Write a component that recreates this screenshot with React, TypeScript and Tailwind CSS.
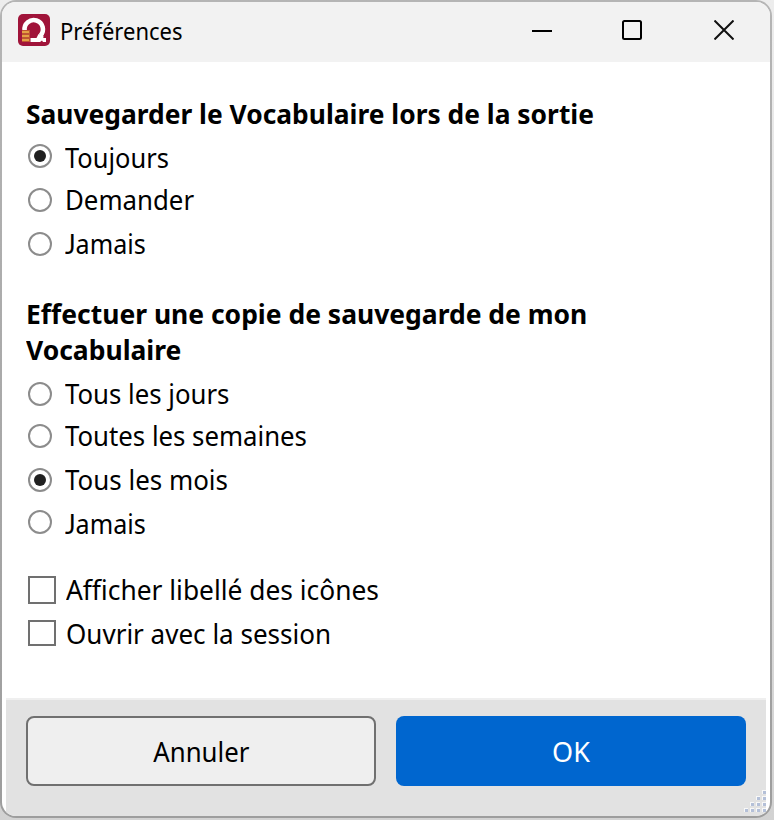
import type { ReactNode } from "react";

function Radio({
  label,
  checked = false,
  dot = "mt-[6px]",
  height = "h-11",
  stretch,
}: {
  label: ReactNode;
  checked?: boolean;
  dot?: string;
  height?: string;
  stretch: string;
}) {
  return (
    <div role="radio" aria-checked={checked} className={`flex items-start pl-[2px] ${height}`}>
      <span
        className={`flex size-6 shrink-0 items-center justify-center rounded-full border-2 border-[#8c8c8c] bg-white ${dot}`}
      >
        {checked && <span className="size-3 rounded-full bg-[#202020]" />}
      </span>
      <span className={`ml-[12.5px] origin-left whitespace-nowrap ${stretch}`}>{label}</span>
    </div>
  );
}

function Checkbox({ label, box, height, stretch }: { label: string; box: string; height: string; stretch: string }) {
  return (
    <div role="checkbox" aria-checked={false} className={`flex items-start pl-[2px] ${height}`}>
      <span className={`mt-1 w-7 shrink-0 border-2 border-[#707070] bg-white ${box}`} />
      <span className={`ml-[10px] origin-left whitespace-nowrap ${stretch}`}>{label}</span>
    </div>
  );
}

function Never() {
  return (
    <>
      <span className="font-['Lato']">J</span>amais
    </>
  );
}

function AppIcon() {
  return (
    <svg width="32" height="32" viewBox="0 0 32 32" className="shrink-0">
      <rect width="32" height="32" rx="5" fill="#a0143a" />
      <path d="M6.6 16.5A9.2 9.2 0 1 1 22.5 21.5" fill="none" stroke="#fff" strokeWidth="4.6" />
      <path d="M12.5 24H18.5L20.5 20L25.5 22L25.3 24H28V28H25L24 26.6L22 28H12.5Z" fill="#fff" />
      <path d="M4 16h8v12H4z" fill="#bf5532" />
      <path d="M4 17h7v2H4zM4 21h7v2H4zM4 25h7v2H4z" fill="#e5a044" />
    </svg>
  );
}

const gripDots = [
  [18, 0],
  [12, 6], [18, 6],
  [6, 12], [12, 12], [18, 12],
  [0, 18], [6, 18], [12, 18], [18, 18],
];

function SizeGrip() {
  return (
    <svg width="22" height="22" viewBox="0 0 22 22" className="absolute right-0 bottom-1">
      {gripDots.map(([x, y]) => (
        <g key={`${x}-${y}`}>
          <rect x={x} y={y} width="4" height="4" fill="#f8f8f8" />
          <rect x={x + 1} y={y + 1} width="3" height="3" fill="#b4c0d8" />
        </g>
      ))}
    </svg>
  );
}

export default function App() {
  return (
    <div className="h-[820px] w-[774px] bg-[linear-gradient(to_bottom,#ededed,#d2d2d2)] pr-[2px] pb-[2px] font-['Noto_Sans','Open_Sans',sans-serif] text-[27px] leading-9 text-black">
      <div className="h-full rounded-[16px] bg-[linear-gradient(to_bottom,#b5b5b5,#9d9d9d)] p-[2px]">
        <div className="flex h-full flex-col overflow-hidden rounded-[14px] bg-white">
          <header className="flex h-[60px] shrink-0 items-start bg-[#f2f2f2] pt-3 pl-4">
            <AppIcon />
            <h1 className="ml-[10px] origin-left scale-x-[.917] text-2xl leading-[34px]">Préférences</h1>
            <div className="mt-[6px] mr-[36px] ml-auto flex">
              <svg width="20" height="20" className="mr-[70px]" viewBox="0 0 20 20">
                <path d="M0 11H20" stroke="#000" strokeWidth="2" />
              </svg>
              <svg width="20" height="20" className="mr-[72px]" viewBox="0 0 20 20">
                <rect x="1" y="1" width="18" height="18" rx="1.5" fill="none" stroke="#000" strokeWidth="2" />
              </svg>
              <svg width="20" height="20" viewBox="0 0 20 20">
                <path d="M.5.5L19.5 19.5M19.5.5L.5 19.5" stroke="#111" strokeWidth="2" />
              </svg>
            </div>
          </header>

          <main className="flex-1 pt-[34px] pl-6">
            <section role="radiogroup">
              <h2 className="mb-2 w-max origin-left scale-x-[.977] font-bold">
                Sauvegarder le Vocabulaire lors de la sortie
              </h2>
              <Radio label="Toujours" checked dot="mt-1" height="h-[42px]" stretch="scale-x-[.942]" />
              <Radio label="Demander" stretch="scale-x-[.956]" />
              <Radio label={<Never />} height="h-9" stretch="scale-x-[.93]" />
            </section>

            <section role="radiogroup" className="mt-[34px]">
              <h2 className="mb-2 w-max origin-left scale-x-[.98] font-bold">
                Effectuer une copie de sauvegarde de mon
                <br />
                Vocabulaire
              </h2>
              <Radio label="Tous les jours" height="h-[42px]" stretch="scale-x-[.954]" />
              <Radio label="Toutes les semaines" stretch="scale-x-[.954]" />
              <Radio label="Tous les mois" checked stretch="scale-x-[.96]" />
              <Radio label={<Never />} dot="mt-1" height="h-9" stretch="scale-x-[.93]" />
            </section>

            <section className="mt-[30px]">
              <Checkbox label="Afficher libellé des icônes" box="h-7" height="h-11" stretch="scale-x-[.976]" />
              <Checkbox label="Ouvrir avec la session" box="h-[26px]" height="h-9" stretch="scale-x-[.964]" />
            </section>
          </main>

          <footer className="relative mr-1 ml-1 flex h-[118px] shrink-0 gap-5 border-t-2 border-[#efefef] bg-[#e2e2e2] pt-4 pl-5">
            <button className="h-[70px] w-[350px] rounded-[8px] border-2 border-[#707070] bg-[#efefef] pt-[2px]">
              <span className="inline-block scale-x-[.955]">Annuler</span>
            </button>
            <button className="h-[70px] w-[350px] rounded-[8px] bg-[#0066cf] pt-[2px] text-white">
              <span className="inline-block">OK</span>
            </button>
            <SizeGrip />
          </footer>
        </div>
      </div>
    </div>
  );
}
